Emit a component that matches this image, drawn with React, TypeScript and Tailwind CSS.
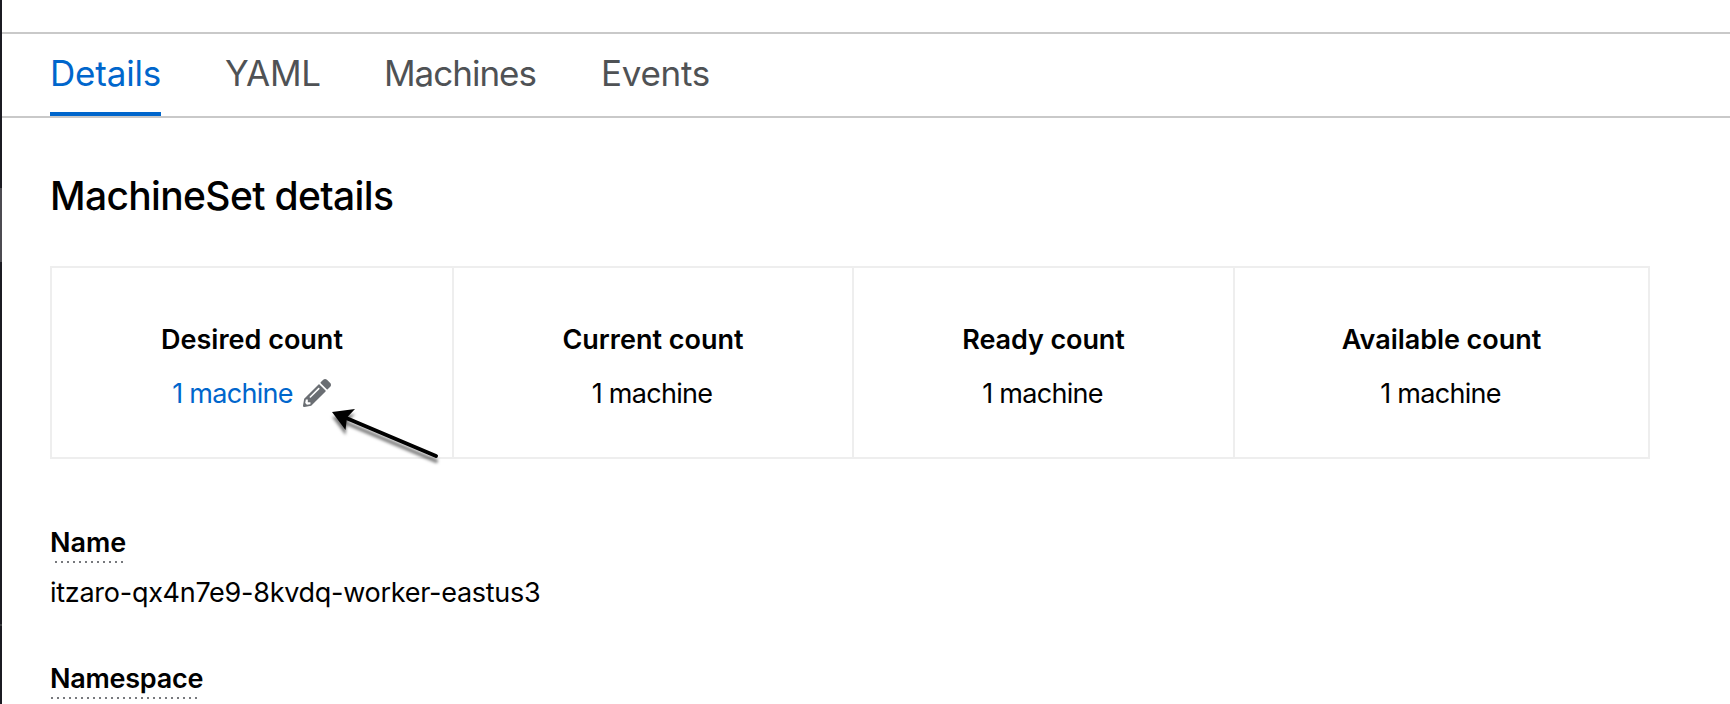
import React from "react";
import { FaPencilAlt } from "react-icons/fa";

const tabs = [
  { label: "Details", cls: "w-[111px] tracking-[-0.2px] text-[#0066cc]", active: true },
  { label: "YAML", cls: "w-[95px] tracking-[-0.2px] text-[#4f5255]", active: false },
  { label: "Machines", cls: "w-[153px] tracking-[-1px] text-[#4f5255]", active: false },
  { label: "Events", cls: "w-[110px] tracking-[-0.3px] text-[#4f5255]", active: false },
];

const counts = [
  { label: "Desired count", col: "w-[402px] border-r-2", tracking: "tracking-normal", editable: true },
  { label: "Current count", col: "w-[400px] border-r-2", tracking: "tracking-normal", editable: false },
  { label: "Ready count", col: "w-[381px] border-r-2", tracking: "tracking-[-0.1px]", editable: false },
  { label: "Available count", col: "flex-1", tracking: "tracking-[-0.05px]", editable: false },
];

function Rail() {
  return (
    <div className="flex w-[2px] shrink-0 flex-col bg-[#1b1b22]">
      <div className="mt-[188px] h-[74px] bg-[#4c4b51]" />
      <div className="mt-[362px] h-[2px] bg-[#3c3f42]" />
    </div>
  );
}

function PointerArrow() {
  return (
    <svg className="absolute left-[268px] top-[130px]" width="130" height="70" viewBox="320 398 130 70">
      <defs>
        <filter id="arrow-shadow" x="-20%" y="-20%" width="140%" height="150%">
          <feDropShadow dx="0" dy="5" stdDeviation="1.8" floodColor="#000" floodOpacity="0.5" />
        </filter>
      </defs>
      <g filter="url(#arrow-shadow)">
        <path d="M345 417.5 L436 456" stroke="#000" strokeWidth="4" strokeLinecap="round" />
        <path d="M332 412 L355 409 L347 417.5 L345.5 430 Z" fill="#000" />
      </g>
    </svg>
  );
}

const dots = "h-[2px] bg-[repeating-linear-gradient(90deg,#77797d_0_2px,transparent_2px_6px)]";

export default function App() {
  return (
    <div className="flex h-[704px] w-full overflow-hidden bg-white font-['Inter',sans-serif] text-black">
      <Rail />
      <main className="flex min-w-0 flex-1 flex-col">
        <nav className="mt-[32px] flex h-[86px] gap-[64px] border-y-2 border-[#c9c9c9] pl-[48px]">
          {tabs.map((t) => (
            <a
              key={t.label}
              className={`${t.cls} ${t.active ? "border-b-4 border-[#0066cc]" : ""} h-[82px] whitespace-nowrap pt-[17px] text-[35px] leading-[44px]`}
            >
              {t.label}
            </a>
          ))}
        </nav>
        <h2 className="ml-[48px] mt-[54px] h-[48px] whitespace-nowrap text-[39px] font-medium leading-[48px] tracking-[-0.65px]">
          MachineSet details
        </h2>
        <section className="relative ml-[48px] mt-[46px] flex h-[193px] w-[1600px] border-2 border-[#eeeeee]">
          {counts.map((c) => (
            <div key={c.label} className={`${c.col} flex flex-col items-center border-[#eeeeee] pt-[53px]`}>
              <div className={`${c.tracking} whitespace-nowrap text-[27px] font-semibold leading-[37px]`}>{c.label}</div>
              <div className="mt-[17px] flex items-center whitespace-nowrap pr-[2px] text-[27px] leading-[37px] tracking-[-0.7px]">
                <span className={c.editable ? "pl-[1px] text-[#0066cc]" : ""}>1 machine</span>
                {c.editable && <FaPencilAlt className="mb-[2px] ml-[10px] size-[28px] text-[#6a6e73]" />}
              </div>
            </div>
          ))}
          <PointerArrow />
        </section>
        <dl className="ml-[48px] mt-[65px] whitespace-nowrap text-[27px] leading-[37px]">
          <dt className="font-semibold">
            Name
            <div className={`${dots} ml-[5px] w-[68px]`} />
          </dt>
          <dd className="mt-[11px] tracking-[-0.27px]">itzaro-qx4n7e9-8kvdq-worker-eastus3</dd>
          <dt className="mt-[49px] font-semibold tracking-[-0.25px]">
            Namespace
            <div className={`${dots} ml-[1px] w-[148px]`} />
          </dt>
        </dl>
      </main>
    </div>
  );
}
